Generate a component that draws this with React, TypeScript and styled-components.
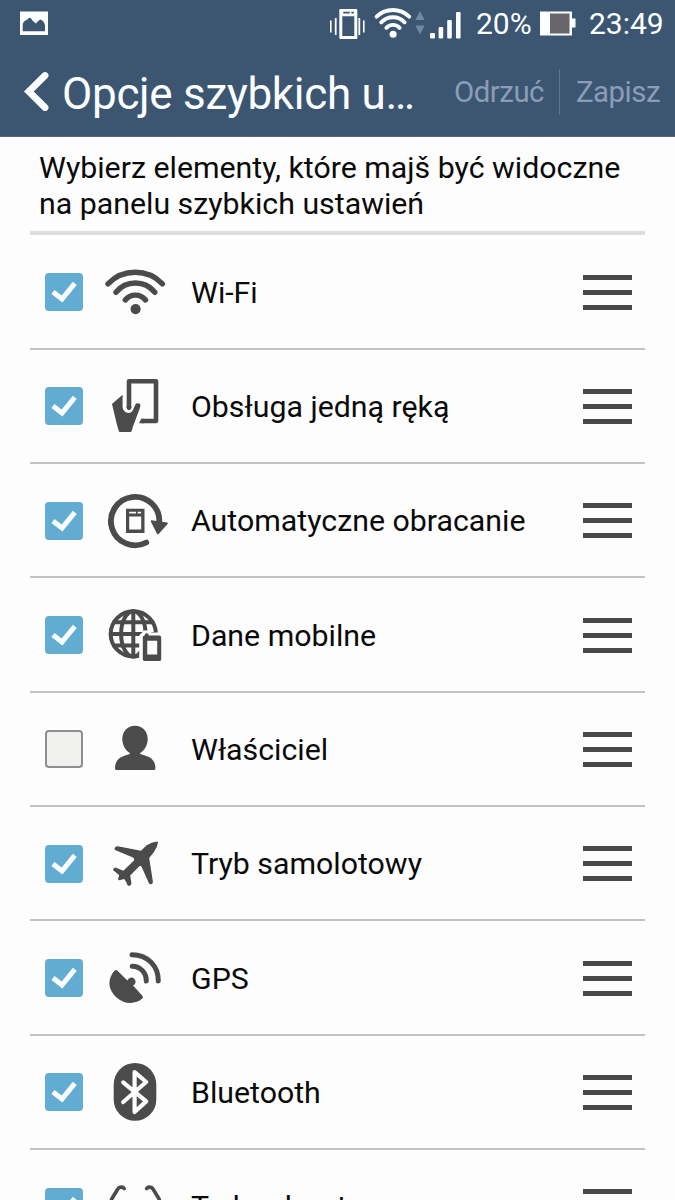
import React from 'react';
import styled, { createGlobalStyle } from 'styled-components';

const GlobalStyle = createGlobalStyle`
  * { box-sizing: border-box; }
  body { margin: 0; background: #fdfdfd; font-family: Roboto, sans-serif; color: #0a0a0a; }
`;

const Screen = styled.div`
  width: 675px;
  height: 1200px;
  overflow: hidden;
  background: #fdfdfd;
`;

const Header = styled.header`
  height: 137px;
  background: #3c5672;
  border-bottom: 1px solid #5d6670;
  color: #fbfeff;
`;

const StatusBar = styled.div`
  display: flex;
  align-items: center;
  justify-content: space-between;
  height: 48px;
  padding: 0 12px 0 20px;
`;

const StatusGroup = styled.div`
  display: flex;
  align-items: center;
`;

const StatusText = styled.span<{ $width: number }>`
  width: ${(p) => p.$width}px;
  font-size: 30px;
  line-height: 48px;
  white-space: nowrap;
`;

const Battery = styled.svg`
  margin: 0 13px 0 8px;
`;

const TitleBar = styled.div`
  display: flex;
  align-items: center;
  height: 88px;
  padding: 0 15px 0 24px;
`;

const Title = styled.h1`
  flex: 1;
  margin: 3px 0 0 12px;
  font-size: 44px;
  font-weight: 400;
  letter-spacing: -0.3px;
  white-space: nowrap;
`;

const Action = styled.span`
  font-size: 29.4px;
  letter-spacing: -0.5px;
  color: #8b9db6;
`;

const ActionDivider = styled.span`
  width: 1px;
  height: 46px;
  margin: 0 16px 0 15px;
  background: #5d7690;
`;

const Content = styled.main`
  padding: 0 30px;
`;

const Intro = styled.p`
  height: 98.4px;
  margin: 0;
  padding: 13px 0 0 9px;
  border-bottom: 4px solid #dedede;
  font-size: 30.3px;
  line-height: 35.5px;
  white-space: nowrap;
`;

const Row = styled.div`
  display: flex;
  align-items: center;
  height: 114.35px;
  padding: 1px 13px 0 15px;
  border-bottom: 2px solid #c3c3c3;
`;

const Checkbox = styled.span<{ $checked: boolean }>`
  display: flex;
  width: 38px;
  height: 38px;
  border-radius: 4px;
  background: ${(p) => (p.$checked ? '#62acd2' : '#f0f0ee')};
  border: ${(p) => (p.$checked ? 'none' : '2px solid #8f8f8f')};
`;

const RowIcon = styled.svg`
  flex: none;
  margin-left: 20px;
  overflow: visible;
`;

const Label = styled.span`
  flex: 1;
  margin-left: 24px;
  font-size: 30.3px;
  white-space: nowrap;
`;

const Handle = styled.span`
  display: flex;
  flex-direction: column;
  justify-content: space-between;
  width: 49px;
  height: 35px;
  &::before, &::after { content: ''; }
  &::before, &::after, & > i { display: block; height: 5px; background: #494949; }
`;

const INK = '#4b4b4b';
const line = (w: number) => ({
  fill: 'none',
  stroke: INK,
  strokeWidth: w,
  strokeLinecap: 'round' as const,
  strokeLinejoin: 'round' as const,
});

const wifi = (
  <>
    <path {...line(5.4)} d="M5 23.8A37.9 37.9 0 0 1 59.4 23.8M13 32.3A24.9 24.9 0 0 1 51.8 32.3M22.3 40A12.9 12.9 0 0 1 42.5 40" />
    <circle cx="32.6" cy="49.1" r="5.1" fill={INK} />
  </>
);

const oneHand = (
  <>
    <path {...line(4.6)} d="M26 34V7.3H53V47H38.5" strokeLinecap="butt" />
    <path fill={INK} d="M9 30L19.6 20.8V33C20 36.5 22.5 38.9 25.7 38.9C28.5 38.9 30 36.6 30.8 34L32.4 30.6C33.2 28.6 37.6 28.6 37.4 31.6L36.9 34L29.9 52.7L28.6 57.2Q28.3 58 27.4 58H17Q16 58 15.8 57L14 51Z" />
    <path fill={INK} d="M23.7 32V34.5Q26 38 28.3 34.5V32ZM38.2 44.7L36 49.3H41V44.7Z" />
  </>
);

const rotate = (
  <>
    <path {...line(5.8)} d="M43.3 53.5A24.2 24.2 0 1 1 56.3 33" />
    <path fill={INK} d="M48.5 31.2L64.2 33.4Q65.4 34 64.6 35L55.6 45Q54.5 46 53.8 44.6L47.8 32.4Q47.6 31.2 48.5 31.2Z" />
    <path fill={INK} fillRule="evenodd" d="M23 19.8H41.5V44H23ZM26.2 27.4V40.6H38.2V27.4ZM26.2 22.8V24.6H33V22.8ZM34.6 22.8V24.6H38.2V22.8Z" />
  </>
);

const globe = (
  <>
    <g {...line(4)}>
      <circle cx="30.3" cy="30.9" r="22.6" />
      <ellipse cx="30.3" cy="30.9" rx="12.2" ry="22.6" />
      <path d="M30.3 8.3V53.5M7.7 30.9H52.9M11 19.2H49.6M11 42.6H49.6" />
    </g>
    <path fill="#fdfdfd" d="M36.2 60V32.5L41 27.5H47L48.5 29.6H62V60Z" />
    <path fill={INK} fillRule="evenodd" d="M39.8 34Q39.8 32.6 41.8 32.5V31.2Q43.7 29.4 45.6 31.2V32.6H56.5Q58.2 32.6 58.2 34.4V56.2Q58.2 58 56.5 58H41.5Q39.8 58 39.8 56.2ZM44.2 37.8V51.6H54.2V37.8Z" />
  </>
);

const person = (
  <path fill={INK} d="M32 8.7C39.5 8.7 44.7 14.5 44.7 22C44.7 28 41.8 33.3 36.8 36.3C37.5 37.4 39.4 37.7 41.4 38.2C48.8 40.2 52.6 44.8 52.4 51.5Q52.3 53 50.8 53H13.4Q12 53 12 51.5C11.9 44.8 15.5 40.2 22.8 38.2C24.8 37.7 26.5 37.4 27.2 36.3C22.2 33.3 19.3 28 19.3 22C19.3 14.5 24.5 8.7 32 8.7Z" />
);

const plane = (
  <path fill={INK} d="M54.2 9.4Q48.5 9.8 43.4 13.6L38 18.7L14.8 14.2Q12.4 14.2 11.4 16.4Q11.3 17.6 12.6 18.2L30 25.6Q32 27 31 28.5L20.3 38.8L12.5 35.6Q10.4 35.8 10 38.2Q13 40 16.2 43.2L15 47Q15.3 48.2 16.4 48.2L21.2 47.1Q23.2 49.5 24.4 53Q25.6 54.3 27.2 53.6Q28.6 52.6 28.4 51L27.2 43.4L36.6 34Q38.2 33.6 38.8 35.2L45.8 51Q47 53 48.8 52Q50 51.3 49.9 49.8L46.2 26L50.8 20.2Q54.6 15 55 10.2Q55 9.4 54.2 9.4Z" />
);

const gps = (
  <>
    <path fill={INK} d="M11.6 24.4Q13 23.4 14.3 24.6L24.4 34.4A4.2 4.2 0 1 1 30 39.6L39.4 49.8Q40.5 51.3 39.4 52.6C32 58.8 21 58.4 13.2 51.2C5 43.5 4 33 11.6 24.4Z" />
    <path {...line(5)} d="M29 8.7C44.5 8.7 55.5 20 55.3 35M29.2 20.2C37.5 20.2 43.5 27 43.3 35" />
  </>
);

const bluetooth = (
  <>
    <rect x="10.7" y="3" width="42.6" height="57.8" rx="21.3" fill={INK} />
    <path {...line(4.2)} stroke="#fdfdfd" d="M20.2 22.4L43.2 41.4L31.6 52V12L43.2 22L20.2 42" />
  </>
);

const glasses = (
  <path {...line(3.6)} d="M21.2 13.6C19.8 11.4 16.2 11.8 14.8 14L9 23.5L4 36M43.6 13.6C45 11.4 48.6 11.8 50 14L55.8 23.5L60.8 36" />
);

const rows = [
  { label: 'Wi-Fi', icon: wifi, checked: true },
  { label: 'Obsługa jedną ręką', icon: oneHand, checked: true },
  { label: 'Automatyczne obracanie', icon: rotate, checked: true },
  { label: 'Dane mobilne', icon: globe, checked: true },
  { label: 'Właściciel', icon: person, checked: false },
  { label: 'Tryb samolotowy', icon: plane, checked: true },
  { label: 'GPS', icon: gps, checked: true },
  { label: 'Bluetooth', icon: bluetooth, checked: true },
  { label: 'Tryb odczytu', icon: glasses, checked: true },
];

export default function App() {
  return (
    <Screen>
      <GlobalStyle />
      <Header>
        <StatusBar>
          <svg width="29" height="26" viewBox="0 0 29 26">
            <path fill="#fbfeff" fillRule="evenodd" d="M0 0.5H28V24H0ZM2.7 20.2H25V14.2Q23.5 9.5 20.5 8.6Q18 9.5 16 12.5Q12.5 10.5 11.5 8Q9 5.5 7.5 8.5Q3.8 9.5 2.7 13Z" />
          </svg>
          <StatusGroup>
            <svg width="151" height="48" viewBox="0 0 151 48" fill="#fbfeff">
              <path fillRule="evenodd" d="M14 9H30Q31 9 31 10V38Q31 39 30 39H14Q13 39 13 38V10Q13 9 14 9ZM16 16.3V36H28V16.3ZM17 11.8V13.6H23.5V11.8ZM25 11.8V13.6H27.6V11.8Z" transform="translate(1.3 0)" />
              <path d="M5 20.5h1.6v12H5zM9.8 18h1.8v17H9.8zM33.4 18h1.8v17h-1.8zM38 20.5h1.6v12H38z" />
              <g fill="none" stroke="#fbfeff" strokeWidth="3.9" strokeLinecap="round">
                <path d="M51.6 16.6A23.5 23.5 0 0 1 84.2 16.6M56.3 22.3A16 16 0 0 1 79.6 22.3M61.4 27.8A9 9 0 0 1 74.6 27.8" />
              </g>
              <circle cx="68.1" cy="34.2" r="3.5" />
              <path fill="#7188a3" d="M95 11L99.6 20H90.4ZM95 34.5L99.6 25.5H90.4Z" />
              <rect x="105" y="33" width="5" height="5.5" rx="1" />
              <rect x="113.6" y="27" width="4.6" height="11.5" rx="1" />
              <rect x="122.2" y="20" width="4.6" height="18.5" rx="1" />
              <rect x="131" y="12" width="4.6" height="26.5" rx="1" />
            </svg>
            <StatusText $width={56}>20%</StatusText>
            <Battery width="36" height="26" viewBox="0 0 36 26">
              <path fill="#fbfeff" d="M0 0.5H32V7.5H35.5V16.5H32V24.5H0Z" />
              <path fill="#666669" d="M10 2.5H29.5V22.5H10Z" />
            </Battery>
            <StatusText $width={74}>23:49</StatusText>
          </StatusGroup>
        </StatusBar>
        <TitleBar>
          <svg width="26" height="42" viewBox="0 0 26 42">
            <path d="M21 4.5L4.8 20.5L21 36.5" fill="none" stroke="#fbfeff" strokeWidth="6.8" strokeLinecap="round" />
          </svg>
          <Title>Opcje szybkich u…</Title>
          <Action>Odrzuć</Action>
          <ActionDivider />
          <Action>Zapisz</Action>
        </TitleBar>
      </Header>
      <Content>
        <Intro>
          Wybierz elementy, które majš być widoczne
          <br />
          na panelu szybkich ustawień
        </Intro>
        {rows.map((row) => (
          <Row key={row.label}>
            <Checkbox $checked={row.checked}>
              {row.checked && (
                <svg width="38" height="38" viewBox="0 0 38 38">
                  <path d="M8 19L17 26L29.8 10.4" fill="none" stroke="#fbfeff" strokeWidth="5" />
                </svg>
              )}
            </Checkbox>
            <RowIcon width="64" height="64" viewBox="0 0 64 64">
              {row.icon}
            </RowIcon>
            <Label>{row.label}</Label>
            <Handle>
              <i />
            </Handle>
          </Row>
        ))}
      </Content>
    </Screen>
  );
}
